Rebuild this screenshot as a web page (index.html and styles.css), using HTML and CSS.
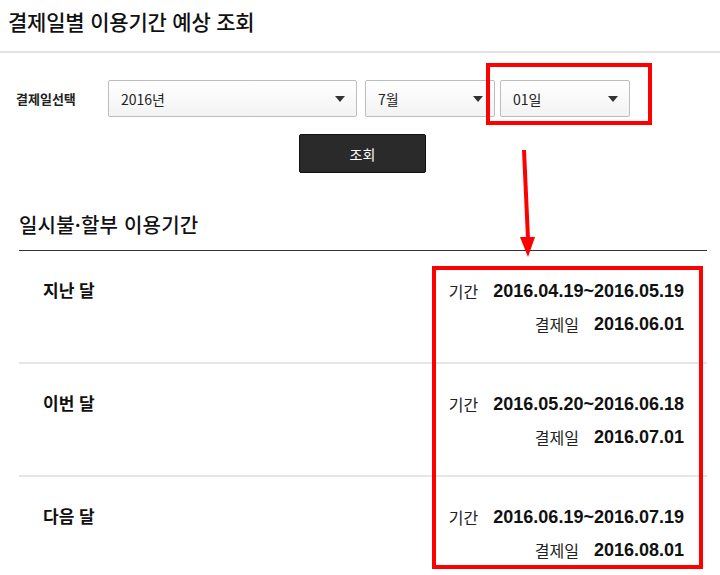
FILE: index.html
```html
<!DOCTYPE html>
<html lang="ko">
<head>
    <meta charset="UTF-8">
    <meta name="viewport" content="width=device-width, initial-scale=1.0">
    <title>결제일별 이용기간 예상 조회</title>
    <link rel="stylesheet" href="styles.css">
</head>
<body>
    <div class="page">
        <div class="page-head">
            <h1>결제일별 이용기간 예상 조회</h1>
        </div>

        <!-- 결제일 선택 -->
        <form class="search">
            <div class="search-row">
                <label class="search-label">결제일선택</label>
                <div class="select select-year"><span>2016년</span><i class="caret"></i></div>
                <div class="select select-month"><span>7월</span><i class="caret"></i></div>
                <div class="select select-day"><span>01일</span><i class="caret"></i></div>
            </div>
            <div class="search-btn">
                <button type="button" class="btn-dark">조회</button>
            </div>
        </form>

        <!-- 이용기간 결과 -->
        <div class="period">
            <h2>일시불·할부 이용기간</h2>
            <ul class="period-list">
                <li class="period-row">
                    <strong class="period-name">지난 달</strong>
                    <div class="period-info">
                        <p class="info-line"><span class="info-label">기간</span><b class="info-value">2016.04.19~2016.05.19</b></p>
                        <p class="info-line"><span class="info-label">결제일</span><b class="info-value">2016.06.01</b></p>
                    </div>
                </li>
                <li class="period-row">
                    <strong class="period-name">이번 달</strong>
                    <div class="period-info">
                        <p class="info-line"><span class="info-label">기간</span><b class="info-value">2016.05.20~2016.06.18</b></p>
                        <p class="info-line"><span class="info-label">결제일</span><b class="info-value">2016.07.01</b></p>
                    </div>
                </li>
                <li class="period-row">
                    <strong class="period-name">다음 달</strong>
                    <div class="period-info">
                        <p class="info-line"><span class="info-label">기간</span><b class="info-value">2016.06.19~2016.07.19</b></p>
                        <p class="info-line"><span class="info-label">결제일</span><b class="info-value">2016.08.01</b></p>
                    </div>
                </li>
            </ul>
        </div>

        <!-- 강조 표시 (캡처 위 덧그림) -->
        <div class="mark mark-day"></div>
        <div class="mark mark-result"></div>
        <svg class="mark-arrow" width="24" height="112" viewBox="0 0 24 112">
            <line x1="9" y1="3" x2="13" y2="92" stroke="#ff0000" stroke-width="4"/>
            <polygon points="5,90 20,90 13,110" fill="#ff0000"/>
        </svg>
    </div>
</body>
</html>
```

FILE: styles.css
```css
body {
    margin: 0;
    font-family: "Noto Sans CJK KR", sans-serif;
    color: #111;
    background-color: #fff;
}
.page {
    position: relative;
    width: 720px;
    height: 575px;
    overflow: hidden;
}
.page-head {
    height: 51px;
    padding: 0 8px;
    border-bottom: 2px solid #e2e2e2;
}
h1 {
    margin: 0;
    font-size: 21px;
    font-weight: 500;
    line-height: 42px;
    letter-spacing: -0.2px;
}
.search {
    padding-top: 27px;
}
.search-row {
    display: flex;
    align-items: center;
    padding-left: 16px;
}
.search-label {
    width: 92px;
    font-size: 13px;
    font-weight: 700;
    color: #222;
}
.select {
    position: relative;
    display: flex;
    align-items: center;
    box-sizing: border-box;
    height: 37px;
    padding: 0 12px;
    font-size: 14px;
    color: #222;
    border: 1px solid #bdbdbd;
    border-radius: 2px;
    background: linear-gradient(#ffffff, #f3f3f3);
}
.select-year {
    width: 249px;
    margin-right: 8px;
}
.select-month {
    width: 130px;
    margin-right: 5px;
}
.select-day {
    width: 130px;
}
.caret {
    position: absolute;
    right: 11px;
    top: 15px;
    border-left: 5px solid transparent;
    border-right: 5px solid transparent;
    border-top: 6px solid #333;
}
.search-btn {
    display: flex;
    justify-content: center;
    padding-left: 5px;
    margin-top: 17px;
}
.btn-dark {
    width: 127px;
    height: 39px;
    font-family: "Noto Sans CJK KR", sans-serif;
    font-size: 14px;
    color: #fff;
    background-color: #2a2a2a;
    border: 1px solid #111;
    border-radius: 2px;
}
.period {
    margin: 37px 13px 0 19px;
}
h2 {
    margin: 0;
    padding-bottom: 10px;
    font-size: 20px;
    font-weight: 500;
    line-height: 30px;
    letter-spacing: 0.2px;
    border-bottom: 1px solid #333;
}
.period-list {
    list-style: none;
    margin: 0;
    padding: 0;
}
.period-row {
    display: flex;
    justify-content: space-between;
    align-items: flex-start;
    padding: 24px 23px 21px 24px;
    border-top: 2px solid #e6e6e6;
}
.period-row:first-child {
    border-top: 0;
}
.period-name {
    font-size: 17px;
    font-weight: 700;
    line-height: 30px;
}
.period-info {
    display: flex;
    flex-direction: column;
    align-items: flex-end;
}
.info-line {
    display: flex;
    align-items: center;
    gap: 15px;
    margin: 0;
    line-height: 33px;
}
.info-label {
    font-size: 16px;
    color: #222;
}
.info-value {
    font-family: "Liberation Sans", Arial, sans-serif;
    font-size: 18px;
    font-weight: 700;
}
.mark {
    position: absolute;
    border: 4px solid #ff0000;
}
.mark-day {
    left: 486px;
    top: 63px;
    width: 158px;
    height: 54px;
}
.mark-result {
    left: 432px;
    top: 266px;
    width: 263px;
    height: 295px;
}
.mark-arrow {
    position: absolute;
    left: 515px;
    top: 147px;
}
```
